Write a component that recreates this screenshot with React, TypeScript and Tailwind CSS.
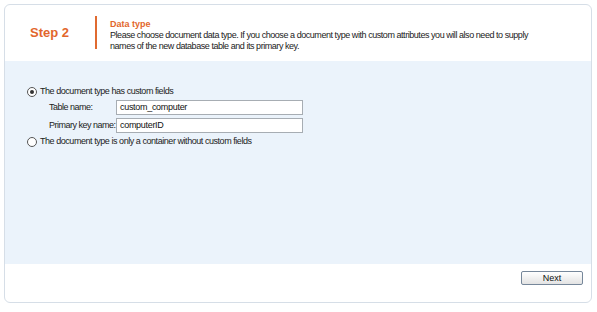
import React from "react";

const Radio = ({ checked }: { checked?: boolean }) => (
  <span className="flex h-[10px] w-[10px] shrink-0 items-center justify-center rounded-full border border-[#555] bg-white">
    {checked && <span className="h-[4px] w-[4px] rounded-full bg-[#333]" />}
  </span>
);

const Field = ({ label, value }: { label: string; value: string }) => (
  <div className="flex h-[15px] items-center">
    <span className="w-[67px] whitespace-nowrap text-[9px] tracking-[-0.5px] text-[#222]">{label}</span>
    <div className="flex h-[15px] w-[187px] items-center border border-[#a7adb3] bg-white pl-[3px] text-[9px] tracking-[-0.3px] text-[#111]">
      {value}
    </div>
  </div>
);

export default function App() {
  return (
    <div className="h-[312px] w-[597px] bg-white pl-[4px] pt-[4px]" style={{ fontFamily: '"Liberation Sans", Arial, sans-serif' }}>
      <div className="flex h-[299px] w-[588px] flex-col overflow-hidden rounded-[6px] border border-[#d6dee7] bg-white">
        {/* Header */}
        <div className="flex h-[56px] shrink-0">
          <div className="flex w-[90px] items-center pl-[25px] pb-[1px] text-[13px] font-bold text-[#e2662c]">
            Step 2
          </div>
          <div className="mt-[11px] h-[33px] w-[2px] bg-[#e06a30]" />
          <div className="ml-[13px] pt-[14px] leading-[11px]">
            <div className="text-[9px] font-bold text-[#e2662c]">Data type</div>
            <div className="w-[425px] text-[9px] tracking-[-0.45px] text-[#222]">
              Please choose document data type. If you choose a document type with custom attributes you will also need to supply names of the new database table and its primary key.
            </div>
          </div>
        </div>

        {/* Body */}
        <div className="flex-1 bg-[#ebf3fb] pl-[22px] pt-[26px]">
          <div className="flex flex-col gap-[3px]">
            <label className="flex h-[10px] items-center gap-[3px] text-[9px] tracking-[-0.45px] text-[#222]">
              <Radio checked />
              The document type has custom fields
            </label>
            <div className="flex flex-col gap-[3px] pl-[22px]">
              <Field label="Table name:" value="custom_computer" />
              <Field label="Primary key name:" value="computerID" />
            </div>
            <label className="mt-[1px] flex h-[10px] items-center gap-[3px] text-[9px] tracking-[-0.45px] text-[#222]">
              <Radio />
              The document type is only a container without custom fields
            </label>
          </div>
        </div>

        {/* Footer */}
        <div className="flex h-[38px] shrink-0 justify-end pr-[8px] pt-[7px]">
          <button className="h-[14px] w-[62px] rounded-[2px] border border-[#76879a] bg-gradient-to-b from-white to-[#e3e3e3] text-[9px] leading-[12px] text-[#111]">
            Next
          </button>
        </div>
      </div>
    </div>
  );
}
